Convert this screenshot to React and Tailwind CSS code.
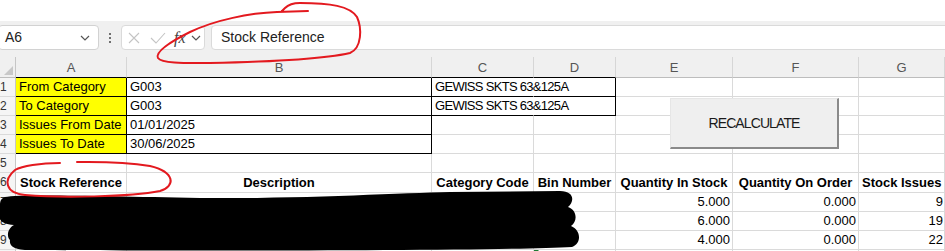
import React from 'react';

const GRID = 'grid grid-cols-[16px_111px_305px_102px_82px_117px_126px_86px]';
const FONT = "font-['Liberation_Sans',Arial,sans-serif]";

// r / b: 'g' grey gridline, 'k' black border, 'n' hidden
function Cell({ children, className = '', r = 'g', b = 'g', tall }) {
  const rc = r === 'k' ? 'border-r-black' : r === 'n' ? 'border-r-transparent' : 'border-r-[#dadada]';
  const bc = b === 'k' ? 'border-b-black' : 'border-b-[#dadada]';
  const h = tall ? 'h-[20px] leading-[19px]' : 'h-[19px] leading-[18px]';
  return (
    <div className={`${h} border-r border-b ${rc} ${bc} px-[3px] text-[13px] text-black whitespace-nowrap ${className}`}>
      {children}
    </div>
  );
}

function RowNum({ n, tall }) {
  const h = tall ? 'h-[20px] leading-[19px]' : 'h-[19px] leading-[18px]';
  return (
    <div className={`${h} overflow-hidden border-r border-b border-r-[#c6c6c6] border-b-[#dadada] bg-[#f5f5f5] pr-[9px] text-right text-[12px] text-[#333]`}>
      {n}
    </div>
  );
}

function ColHead({ children, dark }) {
  return (
    <div className={`h-[21px] border-r border-b border-r-[#d6d6d6] ${dark ? 'border-b-black' : 'border-b-[#bdbdbd]'} text-center text-[13px] leading-[21px] text-[#555]`}>
      {children}
    </div>
  );
}

const params = [
  { label: 'From Category', val: 'G003', cat: 'GEWISS SKTS 63&125A' },
  { label: 'To Category', val: 'G003', cat: 'GEWISS SKTS 63&125A' },
  { label: 'Issues From Date', val: '01/01/2025' },
  { label: 'Issues To Date', val: '30/06/2025' },
];

const headers = ['Stock Reference', 'Description', 'Category Code', 'Bin Number', 'Quantity In Stock', 'Quantity On Order', 'Stock Issues'];

const lines = [
  { qty: '5.000', order: '0.000', issues: '9' },
  { qty: '6.000', order: '0.000', issues: '19' },
  { qty: '4.000', order: '0.000', issues: '22' },
];

function Chevron({ className }) {
  return (
    <svg className={className} width="10" height="6" viewBox="0 0 10 6" fill="none">
      <path d="M1 1l4 4 4-4" stroke="#555" strokeWidth="1.2" />
    </svg>
  );
}

export default function App() {
  return (
    <div className={`relative w-[945px] h-[251px] overflow-hidden bg-white ${FONT}`}>
      <div className="h-[21px] bg-white" />

      {/* formula bar */}
      <div className="h-[36px] bg-[#f0f0f0] flex items-start pt-[4px]">
        <div className="-ml-[2px] w-[101px] h-[25px] rounded-[4px] border border-[#d2d2d2] bg-white flex items-center justify-between pl-[6px] pr-[8px]">
          <span className="text-[14px] text-[#222]">A6</span>
          <Chevron />
        </div>
        <div className="w-[22px] h-[25px] flex flex-col items-center justify-center gap-[2px]">
          <span className="w-[2px] h-[2px] rounded-full bg-[#444]" />
          <span className="w-[2px] h-[2px] rounded-full bg-[#444]" />
          <span className="w-[2px] h-[2px] rounded-full bg-[#444]" />
        </div>
        <div className="w-[84px] h-[25px] rounded-[4px] border border-[#dadada] bg-white flex items-center pl-[6px]">
          <svg width="12" height="12" viewBox="0 0 12 12">
            <path d="M1 1l10 10M11 1L1 11" stroke="#c4c4c4" strokeWidth="1.1" />
          </svg>
          <svg className="ml-[10px]" width="16" height="12" viewBox="0 0 16 12">
            <path d="M1 6l5 5L15 1" stroke="#c4c4c4" strokeWidth="1.1" fill="none" />
          </svg>
          <span className="ml-[8px] font-['Liberation_Serif',serif] italic text-[16px] leading-none text-[#444]">fx</span>
          <Chevron className="ml-[5px]" />
        </div>
        <div className="ml-[6px] flex-1 -mr-[10px] h-[25px] rounded-[4px] border border-[#dadada] bg-white pl-[9px] text-[14px] leading-[23px] text-[#222]">
          Stock Reference
        </div>
      </div>

      {/* sheet */}
      <div className={GRID}>
        <div className="relative h-[21px] border-r border-b border-r-[#c6c6c6] border-b-[#bdbdbd] bg-[#f0f0f0]">
          <svg className="absolute right-[2px] bottom-[2px]" width="9" height="9" viewBox="0 0 9 9">
            <path d="M9 0V9H0Z" fill="#c8c8c8" />
          </svg>
        </div>
        {['A', 'B', 'C', 'D', 'E', 'F', 'G'].map((c, i) => (
          <div key={c} className="bg-[#f0f0f0]">
            <ColHead dark={i < 4}>{c}</ColHead>
          </div>
        ))}

        {params.map((p, i) => (
          <React.Fragment key={p.label}>
            <RowNum n={i + 1} />
            <Cell r="k" b="k" className="bg-[#ffff00]">{p.label}</Cell>
            <Cell r="k" b="k">{p.val}</Cell>
            {p.cat ? (
              <>
                <Cell r="n" b="k" className="tracking-[-0.7px] overflow-visible">{p.cat}</Cell>
                <Cell r="k" b="k" />
              </>
            ) : (
              <>
                <Cell />
                <Cell />
              </>
            )}
            <Cell />
            <Cell />
            <Cell />
          </React.Fragment>
        ))}

        <RowNum n={5} />
        {[0, 1, 2, 3, 4, 5, 6].map((k) => <Cell key={k} />)}

        <RowNum n={6} tall />
        {headers.map((h) => (
          <Cell key={h} tall className="text-center font-bold overflow-hidden">{h}</Cell>
        ))}

        {lines.map((l, i) => (
          <React.Fragment key={i}>
            <RowNum n={i + 7} />
            <Cell />
            <Cell />
            <Cell />
            <Cell />
            <Cell className="text-right pr-[2px]">{l.qty}</Cell>
            <Cell className="text-right pr-[2px]">{l.order}</Cell>
            <Cell className="text-right pr-[1px]">{l.issues}</Cell>
          </React.Fragment>
        ))}

        {/* row 10, only its top edge shows */}
        <RowNum n="" />
        <Cell />
        <Cell />
        <Cell />
        <Cell className="relative">
          <span className="absolute left-0 top-0 w-0 h-0 border-t-[5px] border-r-[5px] border-t-[#1e7b34] border-r-transparent" />
        </Cell>
        <Cell />
        <Cell />
        <Cell />
      </div>

      {/* macro button */}
      <button className="absolute left-[670px] top-[98px] w-[169px] h-[51px] bg-[#efefef] border-t border-l border-t-[#e6e6e6] border-l-[#e6e6e6] border-r-2 border-b-2 border-r-[#8a8a8a] border-b-[#8a8a8a] text-[14px] tracking-[-0.9px] text-[#1a1a1a]">
        RECALCULATE
      </button>

      {/* redaction + pen marks */}
      <svg className="absolute left-0 top-0 pointer-events-none" width="945" height="251" viewBox="0 0 945 251">
        <path
          d="M5 197 C20 194 100 196 200 198 C300 199 400 193 450 192 L560 191 C574 191 575 201 568 207 C577 210 578 221 571 226 C581 230 582 243 572 247 C500 251 200 251 30 250 C14 250 9 246 10 240 C6 236 8 228 14 225 C2 224 -2 220 0 214 L0 205 C0 200 2 198 5 197 Z"
          fill="#000"
        />
        <path
          d="M308 11 L277 12 C250 13 215 20 190 32 C170 42 155 52 158 58 C162 64 190 63 210 63 C260 62 320 60 350 53 C362 48 362 28 357 17 C350 6 330 3 300 3 C292 3 288 5 285 8 L282 11"
          fill="none"
          stroke="#e3191f"
          strokeWidth="2"
          strokeLinecap="round"
        />
        <path
          d="M60 163 C40 163 22 166 15 170 C3 180 5 193 25 195 C60 198 130 197 160 191 C176 186 175 172 150 166 C120 161 90 162 77 162"
          fill="none"
          stroke="#e3191f"
          strokeWidth="2"
          strokeLinecap="round"
        />
      </svg>
    </div>
  );
}
